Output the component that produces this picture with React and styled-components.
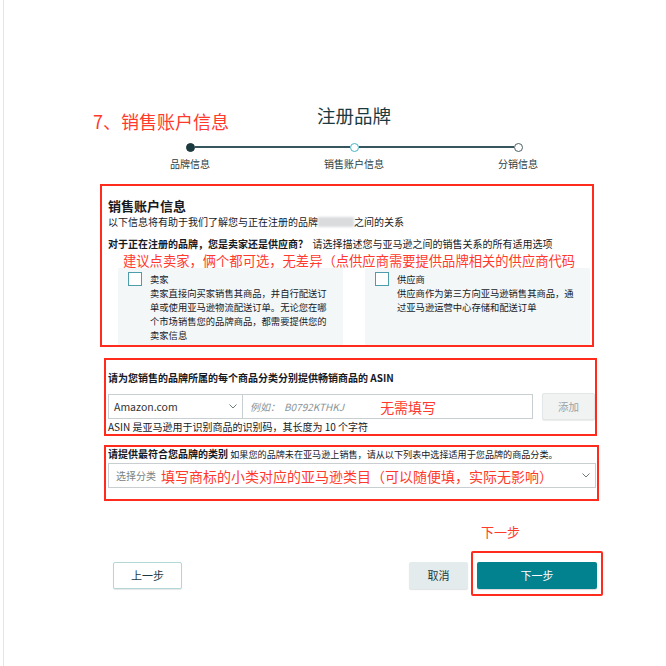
import React from "react";
import styled, { createGlobalStyle } from "styled-components";

const Global = createGlobalStyle`
  html, body { margin: 0; padding: 0; background: #fff; }
  body { font-family: "Noto Sans CJK SC", "Noto Sans", sans-serif; color: #16191f; }
  * { box-sizing: border-box; }
`;

const RED = "#ff2b1c";
const RED_TEXT = "#ff3a2c";

const Page = styled.div`
  margin-left: 3px;
  border-left: 1px solid #e4e4e4;
  min-height: 666px;
`;

const Column = styled.div`
  margin-left: 96px;
  width: 504px;
  padding-top: 103px;
  padding-bottom: 60px;
`;

const Header = styled.div`
  position: relative;
  height: 24px;
  display: flex;
  justify-content: center;
  padding-left: 4px;
`;

const Annotation = styled.span`
  color: ${RED_TEXT};
  font-size: ${(p) => p.$size || 14}px;
  line-height: ${(p) => p.$lh || 16}px;
  white-space: nowrap;
`;

const HeaderNote = styled(Annotation)`
  position: absolute;
  left: -7px;
  top: 6px;
  font-size: 18px;
  line-height: 24px;
`;

const Title = styled.h1`
  margin: 0;
  font-size: 18.5px;
  line-height: 24px;
  font-weight: 400;
  color: #1b3a3f;
`;

const Stepper = styled.div`
  margin: 15px 0 0 8px;
  width: 492px;
  display: grid;
  grid-template-columns: repeat(3, 1fr);
`;

const Step = styled.div`
  display: flex;
  flex-direction: column;
  align-items: center;
`;

const DotRow = styled.div`
  width: 100%;
  height: 10px;
  display: flex;
  align-items: center;
`;

const Line = styled.div`
  flex: 1;
  height: 1.5px;
  background: ${(p) => (p.$hidden ? "transparent" : "#35565c")};
`;

const Dot = styled.div`
  width: 9px;
  height: 9px;
  border-radius: 50%;
  flex: none;
  background: ${(p) => (p.$state === "done" ? "#1b3a3f" : "#fff")};
  border: 1.5px solid
    ${(p) => (p.$state === "done" ? "#1b3a3f" : p.$state === "active" ? "#45b6c6" : "#4d5f63")};
`;

const StepLabel = styled.div`
  margin-top: 6px;
  font-size: 10px;
  line-height: 12px;
  color: #2b3d41;
`;

const RedBox = styled.section`
  border: 2px solid ${RED};
  margin-top: ${(p) => p.$mt}px;
  margin-left: ${(p) => p.$ml || 0}px;
  width: ${(p) => p.$w}px;
  padding: ${(p) => p.$pad};
`;

const SectionTitle = styled.h2`
  margin: 0;
  font-size: 13px;
  line-height: 18px;
  font-weight: 700;
  color: #16191f;
`;

const Text = styled.div`
  font-size: ${(p) => p.$size || 10}px;
  line-height: ${(p) => p.$lh || 14}px;
  margin-top: ${(p) => p.$mt || 0}px;
  color: #16191f;
  white-space: nowrap;
`;

const Bold = styled.span`
  font-weight: 700;
`;

const Small = styled.span`
  font-size: 9.1px;
`;

const Blur = styled.span`
  display: inline-block;
  width: 36px;
  height: 10px;
  vertical-align: -1px;
  background: #d9dbdc;
  filter: blur(1px);
`;

const BoxNote = styled(Annotation)`
  display: block;
  margin: 3px 0 0 15px;
  font-size: 13.3px;
  line-height: 15px;
`;

const Cards = styled.div`
  display: flex;
  gap: 22px;
  margin-left: 10px;
`;

const Card = styled.label`
  width: 225px;
  background: #f4f7f8;
  display: flex;
  align-items: flex-start;
  padding: 4px 8px 3px 10px;
`;

const Check = styled.span`
  width: 14px;
  height: 14px;
  flex: none;
  border: 1.5px solid #4d9daa;
  background: #fff;
  margin-right: 8px;
`;

const CardBody = styled.div`
  font-size: 9.3px;
  line-height: 14px;
  color: #16191f;
`;

const CardLine = styled.div`
  white-space: nowrap;
`;

const InputRow = styled.div`
  margin-top: 8px;
  display: flex;
  align-items: center;
`;

const SelectBox = styled.div`
  height: 25px;
  width: ${(p) => p.$w}px;
  margin-top: ${(p) => p.$mt || 0}px;
  border: 1px solid #c9cfd1;
  background: #fff;
  display: flex;
  align-items: center;
  padding: 0 5px 0 ${(p) => p.$pl || 5}px;
  font-size: ${(p) => p.$fs || 10.5}px;
  color: ${(p) => p.$color || "#333"};
  white-space: nowrap;
`;

const Grow = styled.span`
  flex: 1;
`;

const Chevron = () => (
  <svg width="8" height="5" viewBox="0 0 8 5" fill="none">
    <path d="M0.5 0.5 L4 4 L7.5 0.5" stroke="#6f7a7c" strokeWidth="1" />
  </svg>
);

const TextInput = styled.div`
  height: 25px;
  width: 290px;
  border: 1px solid #c9cfd1;
  border-left: none;
  display: flex;
  align-items: center;
  padding-left: 7px;
  font-size: 10px;
  font-style: italic;
  color: #8b9496;
  white-space: nowrap;
`;

const Placeholder = styled.span`
  margin-right: ${(p) => p.$mr || 0}px;
`;

const InlineNote = styled(Annotation)`
  font-style: normal;
  margin-left: ${(p) => p.$ml || 0}px;
`;

const AddButton = styled.button`
  margin-left: 9px;
  width: 53px;
  height: 27px;
  border: 1px solid #e3e6e6;
  background: #f1f3f3;
  border-radius: 2px;
  font-family: inherit;
  font-size: 10.5px;
  color: #9aa2a4;
  box-shadow: 0 1px 1px rgba(0, 0, 0, 0.08);
`;

const Footer = styled.div`
  margin-top: 23px;
  width: 503px;
  display: flex;
  align-items: flex-end;
`;

const BaseButton = styled.button`
  height: 27px;
  border-radius: 2px;
  font-family: inherit;
  font-size: 11px;
  padding: 0;
`;

const PrevButton = styled(BaseButton)`
  width: 69px;
  margin: 0 0 7px 13px;
  background: #fff;
  border: 1px solid #b3d7d6;
  color: #1b3a3f;
  box-shadow: 0 1px 1px rgba(0, 0, 0, 0.1);
`;

const CancelButton = styled(BaseButton)`
  width: 59px;
  margin: 0 3px 7px 0;
  background: #e3ebec;
  border: none;
  color: #1b3a3f;
  box-shadow: 0 1px 1px rgba(0, 0, 0, 0.12);
`;

const NextGroup = styled.div`
  display: flex;
  flex-direction: column;
`;

const NextNote = styled(Annotation)`
  margin-left: 10px;
  font-size: 13px;
`;

const NextFrame = styled.div`
  margin-top: 11px;
  border: 2px solid ${RED};
  border-radius: 2px;
  padding: 8px 4px 5px 4px;
`;

const NextButton = styled(BaseButton)`
  width: 120px;
  background: #02818f;
  border: none;
  color: #fff;
  box-shadow: 0 1px 1px rgba(0, 0, 0, 0.15);
`;

const steps = [
  { label: "品牌信息", state: "done" },
  { label: "销售账户信息", state: "active" },
  { label: "分销信息", state: "todo" },
];

const cards = [
  {
    title: "卖家",
    lines: [
      "卖家直接向买家销售其商品，并自行配送订",
      "单或使用亚马逊物流配送订单。无论您在哪",
      "个市场销售您的品牌商品，都需要提供您的",
      "卖家信息",
    ],
  },
  {
    title: "供应商",
    lines: ["供应商作为第三方向亚马逊销售其商品，通", "过亚马逊运营中心存储和配送订单"],
  },
];

export default function App() {
  return (
    <>
      <Global />
      <Page>
        <Column>
          <Header>
            <HeaderNote>7、销售账户信息</HeaderNote>
            <Title>注册品牌</Title>
          </Header>

          <Stepper>
            {steps.map((s, i) => (
              <Step key={s.label}>
                <DotRow>
                  <Line $hidden={i === 0} />
                  <Dot $state={s.state} />
                  <Line $hidden={i === steps.length - 1} />
                </DotRow>
                <StepLabel>{s.label}</StepLabel>
              </Step>
            ))}
          </Stepper>

          <RedBox $mt={14} $w={494} $pad="11px 0 0 6px">
            <SectionTitle>销售账户信息</SectionTitle>
            <Text>
              以下信息将有助于我们了解您与正在注册的品牌<Blur />之间的关系
            </Text>
            <Text $mt={8} $lh={13}>
              <Bold>对于正在注册的品牌，您是卖家还是供应商？</Bold>&nbsp;&nbsp;请选择描述您与亚马逊之间的销售关系的所有适用选项
            </Text>
            <BoxNote>建议点卖家，俩个都可选，无差异（点供应商需要提供品牌相关的供应商代码</BoxNote>
            <Cards>
              {cards.map((c) => (
                <Card key={c.title}>
                  <Check />
                  <CardBody>
                    <CardLine>{c.title}</CardLine>
                    {c.lines.map((l) => (
                      <CardLine key={l}>{l}</CardLine>
                    ))}
                  </CardBody>
                </Card>
              ))}
            </Cards>
          </RedBox>

          <RedBox $mt={11} $ml={4} $w={493} $pad="11px 0 1px 2px">
            <Text>
              <Bold>请为您销售的品牌所属的每个商品分类分别提供畅销商品的 ASIN</Bold>
            </Text>
            <InputRow>
              <SelectBox $w={135}>
                Amazon.com
                <Grow />
                <Chevron />
              </SelectBox>
              <TextInput>
                <Placeholder $mr={4}>例如：</Placeholder>
                <Placeholder>B0792KTHKJ</Placeholder>
                <InlineNote $ml={36}>无需填写</InlineNote>
              </TextInput>
              <AddButton>添加</AddButton>
            </InputRow>
            <Text $lh={12} $mt={1}>
              ASIN 是亚马逊用于识别商品的识别码，其长度为 10 个字符
            </Text>
          </RedBox>

          <RedBox $mt={9} $ml={4} $w={495} $pad="0 0 11px 2px">
            <Text>
              <Bold>请提供最符合您品牌的类别</Bold>{" "}
              <Small>如果您的品牌未在亚马逊上销售，请从以下列表中选择适用于您品牌的商品分类。</Small>
            </Text>
            <SelectBox $w={488} $mt={2} $pl={7} $fs={10} $color="#7a8385">
              选择分类
              <InlineNote $ml={5}>填写商标的小类对应的亚马逊类目（可以随便填，实际无影响）</InlineNote>
              <Grow />
              <Chevron />
            </SelectBox>
          </RedBox>

          <Footer>
            <PrevButton>上一步</PrevButton>
            <Grow />
            <CancelButton>取消</CancelButton>
            <NextGroup>
              <NextNote>下一步</NextNote>
              <NextFrame>
                <NextButton>下一步</NextButton>
              </NextFrame>
            </NextGroup>
          </Footer>
        </Column>
      </Page>
    </>
  );
}
